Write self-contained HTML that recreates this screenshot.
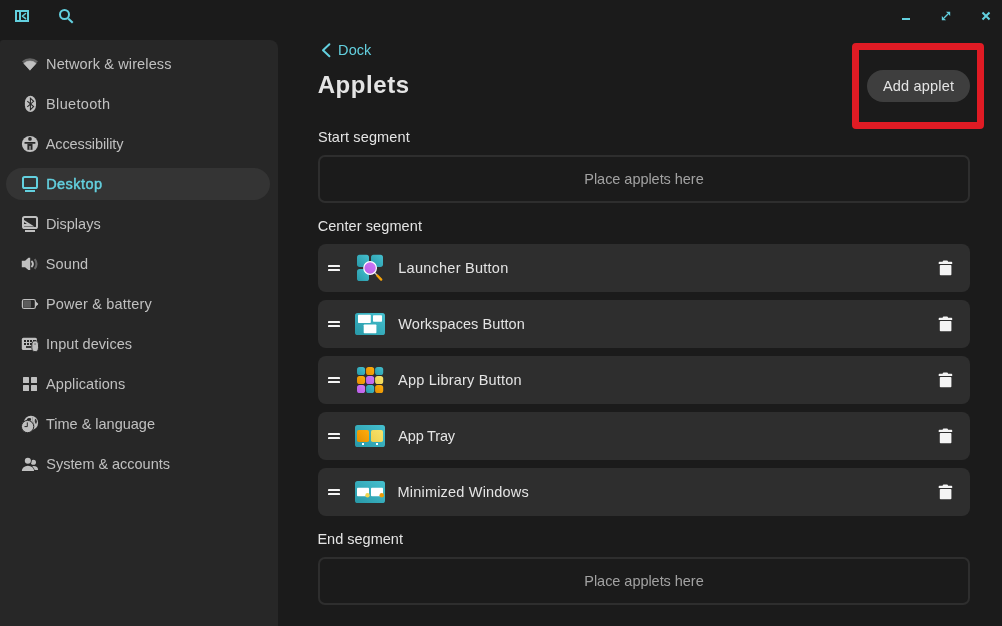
<!DOCTYPE html>
<html lang="en">
<head>
<meta charset="utf-8">
<title>Settings - Applets</title>
<style>
html,body{margin:0;padding:0;background:#1b1b1b;}
body{width:1002px;height:626px;position:relative;overflow:hidden;font-family:"Liberation Sans",sans-serif;}
.t{position:absolute;white-space:nowrap;}
.abs{position:absolute;}
#texts{position:absolute;left:0;top:0;width:1002px;height:626px;will-change:transform;}
#sidebar{left:0;top:40px;width:278px;height:600px;background:#272727;border-radius:3px 8px 0 0;}
#sel{left:6px;top:168px;width:264px;height:32px;border-radius:16px;background:#343434;}
.row{left:318px;width:652px;height:48px;border-radius:8px;background:#2e2e2e;}
.ph{left:318px;width:648px;height:44px;border-radius:7px;border:2px solid #2e2e2e;}
#addbtn{left:867px;top:70px;width:103px;height:32px;border-radius:16px;background:#3e3e3e;}
#redbox{left:852px;top:43px;width:118px;height:72px;border:7px solid #e01b24;border-radius:4px;}
svg{position:absolute;left:0;top:0;}
</style>
</head>
<body>
<div class="abs" id="sidebar"></div>
<div class="abs" id="sel"></div>
<div class="abs ph" style="top:155px"></div>
<div class="abs row" style="top:244px"></div>
<div class="abs row" style="top:300px"></div>
<div class="abs row" style="top:356px"></div>
<div class="abs row" style="top:412px"></div>
<div class="abs row" style="top:468px"></div>
<div class="abs ph" style="top:557px"></div>
<div class="abs" id="addbtn"></div>
<div class="abs" id="redbox"></div>
<svg width="1002" height="626" viewBox="0 0 1002 626">
<defs>
<linearGradient id="teal" x1="0" y1="1" x2="1" y2="0"><stop offset="0" stop-color="#2899a8"/><stop offset="1" stop-color="#45c0cf"/></linearGradient>
<linearGradient id="org" x1="0" y1="1" x2="1" y2="0"><stop offset="0" stop-color="#e38f00"/><stop offset="1" stop-color="#ffad0d"/></linearGradient>
<linearGradient id="yel" x1="0" y1="1" x2="1" y2="0"><stop offset="0" stop-color="#ecd04f"/><stop offset="1" stop-color="#f7e36c"/></linearGradient>
<linearGradient id="pur" x1="0" y1="1" x2="1" y2="0"><stop offset="0" stop-color="#b95ce6"/><stop offset="1" stop-color="#cf7cf7"/></linearGradient>
</defs>
<!-- header icons -->
<g fill="none" stroke="#63d0df">
<rect x="16" y="11" width="12" height="10" stroke-width="2"/>
<path d="M20 11 V21" stroke-width="2"/>
<path d="M25.6 13.5 L22.4 16.1 L25.6 18.7" stroke-width="1.5" stroke-linecap="round" stroke-linejoin="round"/>
<circle cx="64.5" cy="14.5" r="4.5" stroke-width="2"/>
<path d="M68.2 18.4 L72.7 22.7" stroke-width="2.1"/>
<path d="M983.2 13.2 L988.8 18.8 M988.8 13.2 L983.2 18.8" stroke-width="2" stroke-linecap="square"/>
<path d="M944 18 L948 14" stroke-width="1.3"/>
</g>
<g fill="#63d0df">
<rect x="902" y="18" width="8" height="2"/>
<path d="M950.2 11.8 V16 L946 11.8 Z"/>
<path d="M941.8 20.2 V16 L946 20.2 Z"/>
</g>
<!-- breadcrumb chevron -->
<path d="M329.4 44.3 L323 50.3 L329.4 56.3" fill="none" stroke="#63d0df" stroke-width="2" stroke-linecap="round" stroke-linejoin="round"/>

<!-- sidebar icons -->
<!-- wifi -->
<path d="M29.95 70.4 L21.95 61.3 A12.15 12.15 0 0 1 37.95 61.3 Z" fill="#646464"/>
<path d="M29.95 70.2 L23.8 63.4 A9.2 9.2 0 0 1 36.1 63.4 Z" fill="#c0c0c0" stroke="#c0c0c0" stroke-width="0.6" stroke-linejoin="round"/>
<!-- bluetooth -->
<rect x="24.9" y="95.8" width="11.1" height="16.3" rx="5.55" ry="6.8" fill="#c0c0c0"/>
<path d="M27.3 101.1 L33.6 106.6 L30.4 109.7 V98.2 L33.6 101.3 L27.3 106.8" fill="none" stroke="#272727" stroke-width="1.05" stroke-linejoin="miter"/>
<!-- accessibility -->
<circle cx="30" cy="144" r="8.1" fill="#c0c0c0"/>
<g fill="#272727">
<circle cx="29.96" cy="138.9" r="1.85"/>
<rect x="24.5" y="142" width="10.9" height="1.8" rx="0.3"/>
<path d="M27.4 143.7 H32.5 V149.8 H27.4 Z"/>
<rect x="29.2" y="146" width="1.6" height="3.8" fill="#8c8c8c"/>
</g>
<!-- desktop (selected) -->
<rect x="23" y="177" width="14" height="11" rx="1.6" fill="none" stroke="#63d0df" stroke-width="2"/>
<rect x="25" y="190" width="10" height="2" fill="#63d0df"/>
<!-- displays -->
<rect x="23" y="217" width="14" height="11" rx="1.6" fill="none" stroke="#c0c0c0" stroke-width="2"/>
<rect x="25" y="230" width="10" height="2" fill="#c0c0c0"/>
<path d="M22 218.8 L34.4 226.5 H22 Z M23.9 222.1 V224 H27 Z" fill="#c0c0c0" fill-rule="evenodd"/>
<!-- sound -->
<path d="M21.8 260.8 H25.1 L28.4 257.75 H30.2 V270 H28.4 L25.1 267.15 H21.8 Z" fill="#c0c0c0"/>
<path d="M31.4 260.93 A3.9 3.9 0 0 1 31.4 267.07" fill="none" stroke="#c0c0c0" stroke-width="2"/>
<path d="M34.66 259.08 A7.5 7.5 0 0 1 34.66 268.92" fill="none" stroke="#686868" stroke-width="2.1"/>
<!-- battery -->
<rect x="22.4" y="299.5" width="13" height="9" rx="1.8" fill="none" stroke="#c0c0c0" stroke-width="1.2"/>
<path d="M36 301.8 L38 303.4 Q38.3 304 38 304.6 L36 306.2 Z" fill="#c0c0c0"/>
<rect x="23.3" y="300.3" width="7.7" height="7.4" rx="0.6" fill="#5c5c5c"/>
<!-- input devices -->
<rect x="21.8" y="337.8" width="15.2" height="12.2" rx="1.6" fill="#c0c0c0"/>
<g fill="#272727">
<rect x="24" y="340" width="2" height="2"/><rect x="27" y="340" width="2" height="2"/><rect x="30" y="340" width="2" height="2"/><rect x="33" y="340" width="3" height="2"/>
<rect x="24" y="343" width="2" height="2"/><rect x="27" y="343" width="2" height="2"/><rect x="30" y="343" width="2" height="2"/>
<rect x="26" y="346.1" width="5.3" height="1.8"/>
</g>
<rect x="31.8" y="340.8" width="6.7" height="10.8" rx="3.35" ry="4.2" fill="#c0c0c0" stroke="#272727" stroke-width="0.9"/>
<rect x="34.2" y="343.1" width="1.7" height="1.8" fill="#8a8a8a"/>
<!-- applications -->
<g fill="#c0c0c0">
<rect x="23" y="377" width="6" height="6" rx="0.5"/><rect x="31" y="377" width="6" height="6" rx="0.5"/>
<rect x="23" y="385" width="6" height="6" rx="0.5"/><rect x="31" y="385" width="6" height="6" rx="0.5"/>
</g>
<!-- time & language -->
<circle cx="30.95" cy="422.9" r="7.15" fill="#c0c0c0"/>
<path d="M26.4 420.4 Q26.8 418.2 28.8 417.9 L30.9 418.2 L31 420.4 Z" fill="#272727"/>
<path d="M35 418.8 L36.2 419.3 L36.9 421.2 L36.6 423.4 L35.2 423.4 L34.7 421 Z" fill="#333333"/>
<path d="M32.6 417.2 Q31.4 420.2 33.6 423 Q34.6 425.6 33.4 429.2" fill="none" stroke="#8e8e8e" stroke-width="0.8"/>
<circle cx="27.6" cy="426.55" r="6.15" fill="#c0c0c0" stroke="#272727" stroke-width="1"/>
<path d="M27.3 422.4 V426.6 H24.5" fill="none" stroke="#272727" stroke-width="1"/>
<!-- system & accounts -->
<circle cx="33.4" cy="462.25" r="2.6" fill="#c0c0c0"/>
<path d="M32.5 466 Q38.1 465.6 38.1 470.1 H32.5 Z" fill="#c0c0c0"/>
<circle cx="27.85" cy="460.8" r="3.9" fill="#272727"/>
<path d="M20.9 471.8 A7.05 6.9 0 0 1 35 471.8 Z" fill="#272727"/>
<circle cx="27.85" cy="460.8" r="3.05" fill="#c0c0c0"/>
<path d="M21.8 471 A6.15 5.2 0 0 1 34.1 471 Z" fill="#c0c0c0"/>

<!-- rows: handles + trash -->
<g fill="#f4f4f4" transform="translate(0 0)">
<rect x="328" y="265" width="12" height="2.1" rx="0.4"/><rect x="328" y="269" width="12" height="2.1" rx="0.4"/>
<path d="M938.7 262.4 Q938.7 261.7 939.4 261.7 H942.6 Q942.8 260.5 943.8 260.5 H946.9 Q947.9 260.5 948.1 261.7 H951.5 Q952.2 261.7 952.2 262.4 V264.1 H938.7 Z"/>
<rect x="939.8" y="265" width="11.6" height="10.3" rx="0.8"/>
</g>
<g fill="#f4f4f4" transform="translate(0 56)">
<rect x="328" y="265" width="12" height="2.1" rx="0.4"/><rect x="328" y="269" width="12" height="2.1" rx="0.4"/>
<path d="M938.7 262.4 Q938.7 261.7 939.4 261.7 H942.6 Q942.8 260.5 943.8 260.5 H946.9 Q947.9 260.5 948.1 261.7 H951.5 Q952.2 261.7 952.2 262.4 V264.1 H938.7 Z"/>
<rect x="939.8" y="265" width="11.6" height="10.3" rx="0.8"/>
</g>
<g fill="#f4f4f4" transform="translate(0 112)">
<rect x="328" y="265" width="12" height="2.1" rx="0.4"/><rect x="328" y="269" width="12" height="2.1" rx="0.4"/>
<path d="M938.7 262.4 Q938.7 261.7 939.4 261.7 H942.6 Q942.8 260.5 943.8 260.5 H946.9 Q947.9 260.5 948.1 261.7 H951.5 Q952.2 261.7 952.2 262.4 V264.1 H938.7 Z"/>
<rect x="939.8" y="265" width="11.6" height="10.3" rx="0.8"/>
</g>
<g fill="#f4f4f4" transform="translate(0 168)">
<rect x="328" y="265" width="12" height="2.1" rx="0.4"/><rect x="328" y="269" width="12" height="2.1" rx="0.4"/>
<path d="M938.7 262.4 Q938.7 261.7 939.4 261.7 H942.6 Q942.8 260.5 943.8 260.5 H946.9 Q947.9 260.5 948.1 261.7 H951.5 Q952.2 261.7 952.2 262.4 V264.1 H938.7 Z"/>
<rect x="939.8" y="265" width="11.6" height="10.3" rx="0.8"/>
</g>
<g fill="#f4f4f4" transform="translate(0 224)">
<rect x="328" y="265" width="12" height="2.1" rx="0.4"/><rect x="328" y="269" width="12" height="2.1" rx="0.4"/>
<path d="M938.7 262.4 Q938.7 261.7 939.4 261.7 H942.6 Q942.8 260.5 943.8 260.5 H946.9 Q947.9 260.5 948.1 261.7 H951.5 Q952.2 261.7 952.2 262.4 V264.1 H938.7 Z"/>
<rect x="939.8" y="265" width="11.6" height="10.3" rx="0.8"/>
</g>

<!-- launcher -->
<rect x="357" y="254.7" width="12" height="12.2" rx="2.7" fill="url(#teal)"/>
<rect x="371" y="254.7" width="12" height="12.2" rx="2.7" fill="url(#teal)"/>
<rect x="357" y="268.9" width="12" height="12.2" rx="2.7" fill="url(#teal)"/>
<path d="M374 272 L377 275" stroke="#c8c8c8" stroke-width="1.2"/>
<path d="M377.3 275.5 L381.2 279.6" stroke="#f5a30a" stroke-width="2.4" stroke-linecap="round"/>
<circle cx="370.1" cy="268" r="6.9" fill="#272727" opacity="0.0"/><circle cx="370.1" cy="268" r="6.3" fill="url(#pur)" stroke="#ffffff" stroke-width="1.2"/>
<!-- workspaces -->
<rect x="355" y="313" width="30" height="22" rx="2.6" fill="url(#teal)"/>
<g fill="#ffffff">
<rect x="358" y="314.7" width="12.8" height="8.3" rx="0.7"/>
<rect x="373" y="315.2" width="9" height="6.6" rx="0.7"/>
<rect x="363.7" y="324.5" width="12.7" height="8.7" rx="0.7"/>
</g>
<!-- app library -->
<g>
<rect x="357" y="366.9" width="8.1" height="8.1" rx="2.6" fill="url(#teal)"/>
<rect x="366.05" y="366.9" width="8.1" height="8.1" rx="2.6" fill="url(#org)"/>
<rect x="375.1" y="366.9" width="8.1" height="8.1" rx="2.6" fill="url(#teal)"/>
<rect x="357" y="375.95" width="8.1" height="8.1" rx="2.6" fill="url(#org)"/>
<rect x="366.05" y="375.95" width="8.1" height="8.1" rx="2.6" fill="url(#pur)"/>
<rect x="375.1" y="375.95" width="8.1" height="8.1" rx="2.6" fill="url(#yel)"/>
<rect x="357" y="385" width="8.1" height="8.1" rx="2.6" fill="url(#pur)"/>
<rect x="366.05" y="385" width="8.1" height="8.1" rx="2.6" fill="url(#teal)"/>
<rect x="375.1" y="385" width="8.1" height="8.1" rx="2.6" fill="url(#org)"/>
</g>
<!-- app tray -->
<rect x="355" y="425" width="30" height="22" rx="2.6" fill="url(#teal)"/>
<rect x="357" y="430" width="12" height="12" rx="1.8" fill="url(#org)"/>
<rect x="371" y="430" width="12" height="12" rx="1.8" fill="url(#yel)"/>
<rect x="362" y="443" width="2" height="2" fill="#fff"/><rect x="376" y="443" width="2" height="2" fill="#fff"/>
<!-- minimized windows -->
<rect x="355" y="481" width="30" height="22" rx="2.6" fill="url(#teal)"/>
<rect x="357" y="487.7" width="12" height="8.6" rx="0.8" fill="#fff"/>
<rect x="371" y="487.7" width="12" height="8.6" rx="0.8" fill="#fff"/>
<circle cx="367.5" cy="495.3" r="2.2" fill="#f0d44f"/>
<circle cx="381.7" cy="495.3" r="2.2" fill="#ec9a07"/>
</svg>

<div id="texts">
<span class="t" id="t0" style="left:46.10px;top:54.00px;font-size:14.5px;line-height:20.00px;font-weight:400;color:#c0c0c0;letter-spacing:0.122px">Network &amp; wireless</span>
<span class="t" id="t1" style="left:46.10px;top:94.00px;font-size:14.5px;line-height:20.00px;font-weight:400;color:#c0c0c0;letter-spacing:0.334px">Bluetooth</span>
<span class="t" id="t2" style="left:45.78px;top:134.00px;font-size:14.5px;line-height:20.00px;font-weight:400;color:#c0c0c0;letter-spacing:-0.108px">Accessibility</span>
<span class="t" id="t3" style="left:46.20px;top:174.00px;font-size:14.5px;line-height:20.00px;font-weight:400;color:#63d0df;letter-spacing:0.437px;-webkit-text-stroke:0.45px #63d0df">Desktop</span>
<span class="t" id="t4" style="left:45.90px;top:214.00px;font-size:14.5px;line-height:20.00px;font-weight:400;color:#c0c0c0;letter-spacing:-0.008px">Displays</span>
<span class="t" id="t5" style="left:45.70px;top:254.00px;font-size:14.5px;line-height:20.00px;font-weight:400;color:#c0c0c0;letter-spacing:0.139px">Sound</span>
<span class="t" id="t6" style="left:45.90px;top:294.00px;font-size:14.5px;line-height:20.00px;font-weight:400;color:#c0c0c0;letter-spacing:0.194px">Power &amp; battery</span>
<span class="t" id="t7" style="left:45.98px;top:334.00px;font-size:14.5px;line-height:20.00px;font-weight:400;color:#c0c0c0;letter-spacing:0.053px">Input devices</span>
<span class="t" id="t8" style="left:45.98px;top:374.00px;font-size:14.5px;line-height:20.00px;font-weight:400;color:#c0c0c0;letter-spacing:0.103px">Applications</span>
<span class="t" id="t9" style="left:45.98px;top:414.00px;font-size:14.5px;line-height:20.00px;font-weight:400;color:#c0c0c0;letter-spacing:-0.008px">Time &amp; language</span>
<span class="t" id="t10" style="left:46.30px;top:454.00px;font-size:14.5px;line-height:20.00px;font-weight:400;color:#c0c0c0;letter-spacing:-0.031px">System &amp; accounts</span>
<span class="t" id="t11" style="left:338.10px;top:40.30px;font-size:14.5px;line-height:20.00px;font-weight:400;color:#63d0df;letter-spacing:0.067px">Dock</span>
<span class="t" id="t12" style="left:317.65px;top:69.00px;font-size:24px;line-height:31.00px;font-weight:700;color:#e4e4e4;letter-spacing:0.576px">Applets</span>
<span class="t" id="t13" style="left:317.90px;top:127.00px;font-size:14.5px;line-height:20.00px;font-weight:400;color:#e4e4e4;letter-spacing:0.132px">Start segment</span>
<span class="t" id="t14" style="left:584.30px;top:169.00px;font-size:14.5px;line-height:20.00px;font-weight:400;color:#a2a2a2;letter-spacing:-0.040px">Place applets here</span>
<span class="t" id="t15" style="left:882.88px;top:76.00px;font-size:14.5px;line-height:20.00px;font-weight:400;color:#e4e4e4;letter-spacing:0.206px">Add applet</span>
<span class="t" id="t16" style="left:317.65px;top:216.20px;font-size:14.5px;line-height:20.00px;font-weight:400;color:#e4e4e4;letter-spacing:0.085px">Center segment</span>
<span class="t" id="t17" style="left:398.30px;top:258.00px;font-size:14.5px;line-height:20.00px;font-weight:400;color:#e4e4e4;letter-spacing:0.250px">Launcher Button</span>
<span class="t" id="t18" style="left:398.28px;top:314.00px;font-size:14.5px;line-height:20.00px;font-weight:400;color:#e4e4e4;letter-spacing:0.065px">Workspaces Button</span>
<span class="t" id="t19" style="left:398.08px;top:370.00px;font-size:14.5px;line-height:20.00px;font-weight:400;color:#e4e4e4;letter-spacing:0.200px">App Library Button</span>
<span class="t" id="t20" style="left:398.28px;top:426.00px;font-size:14.5px;line-height:20.00px;font-weight:400;color:#e4e4e4;letter-spacing:-0.179px">App Tray</span>
<span class="t" id="t21" style="left:397.60px;top:482.00px;font-size:14.5px;line-height:20.00px;font-weight:400;color:#e4e4e4;letter-spacing:0.190px">Minimized Windows</span>
<span class="t" id="t22" style="left:317.40px;top:529.30px;font-size:14.5px;line-height:20.00px;font-weight:400;color:#e4e4e4;letter-spacing:0.012px">End segment</span>
<span class="t" id="t23" style="left:584.30px;top:571.00px;font-size:14.5px;line-height:20.00px;font-weight:400;color:#a2a2a2;letter-spacing:-0.040px">Place applets here</span>
</div>
</body>
</html>
